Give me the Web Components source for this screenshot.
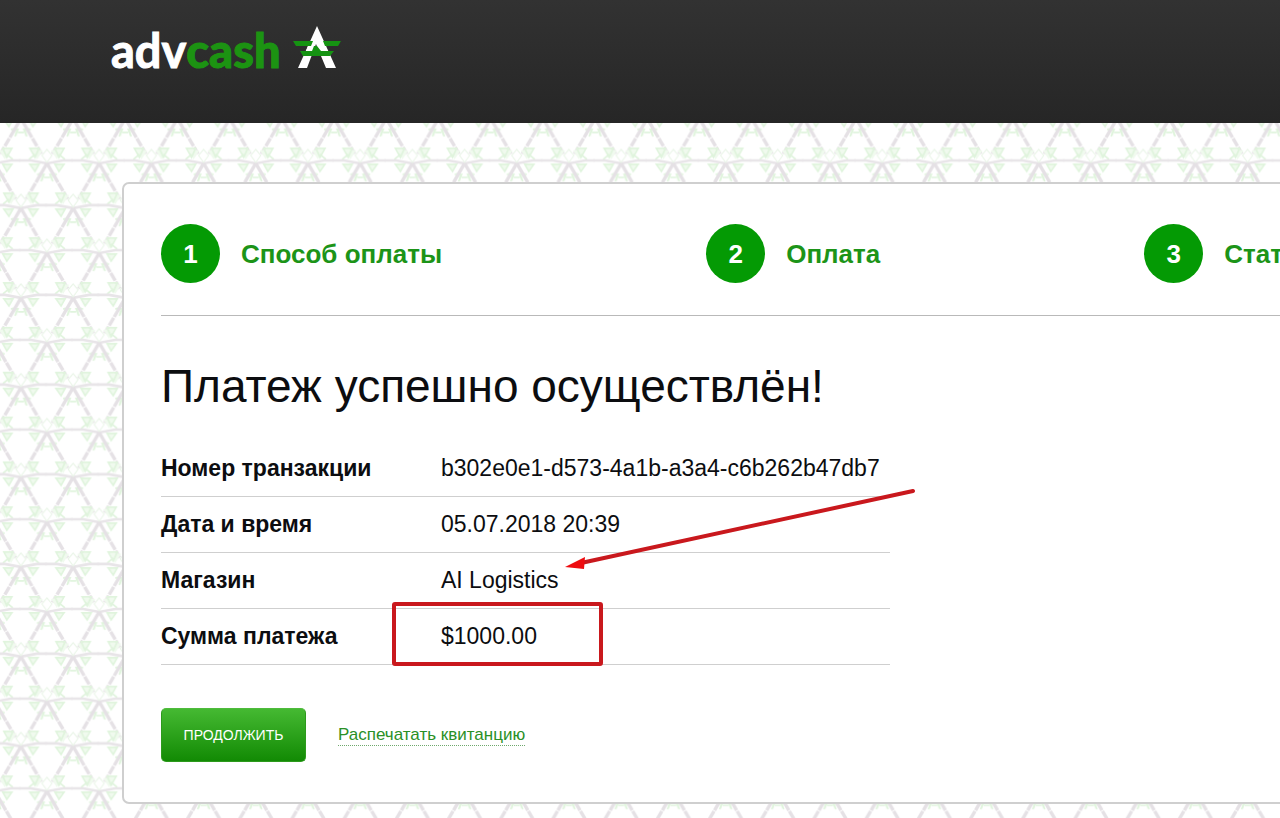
<!DOCTYPE html>
<html lang="ru">
<head>
<meta charset="utf-8">
<title>advcash</title>
<style>
html, body { margin: 0; height: 100%; }
body { font-family: "Liberation Sans", Arial, sans-serif; color: #0c0d10; }
</style>
</head>
<body>
<pay-page>
  <site-header slot="header"></site-header>
  <pay-card>
    <step-list slot="steps">
      <step-item number="1">Способ оплаты</step-item>
      <step-item number="2">Оплата</step-item>
      <step-item number="3">Стат</step-item>
    </step-list>
    <span slot="title">Платеж успешно осуществлён!</span>
    <payment-details></payment-details>
    <pay-actions slot="actions"></pay-actions>
  </pay-card>
</pay-page>
<script>
const define = (name, html, setup) => {
  const template = document.createElement('template');
  template.innerHTML = html;
  customElements.define(name, class extends HTMLElement {
    constructor() {
      super();
      this.attachShadow({ mode: 'open' }).append(template.content.cloneNode(true));
    }
    connectedCallback() { if (setup) setup(this); }
  });
};

// Lattice wallpaper: 5 x 10 repeats of the triangle cell in one tile.
const lattice = `<svg xmlns="http://www.w3.org/2000/svg" width="261" height="897">
<defs>
<g id="k">
<path d="M-16 -14l6 11l6 -9zM16 -14l-6 11l-6 -9zM-17 1h9l-4 7zM17 1h-9l4 7zM-9 10l6 1l-1 8zM9 10l-6 1l1 8z" fill="#f0faee"/>
<path d="M-17 -14h9l-4 9zM17 -14h-9l4 9zM-18 -3l6 -5M18 -3l-6 -5M-17 2h9l-4 7zM17 2h-9l4 7zM-10 12h7l-3 7M10 12h-7l3 7M-3 15h6" stroke="#e0f4dd" stroke-width="1.7"/>
<path d="M0 1L-16 -2H-28M0 1L16 -2H26" stroke="#e8e5e8" stroke-width="2.6"/>
<path d="M0 1L26 45.8M0 1L-26 45.8" stroke="#e5e1e5" stroke-width="3.4" stroke-dasharray="22 1 9 1 8 11"/>
<path d="M0 -13l5 6l-5 7l-5 -7z" fill="#fff" stroke="#e8f4e6" stroke-width="1"/>
</g>
<pattern id="p" width="52.2" height="89.7" patternUnits="userSpaceOnUse">
<g fill="none">
<use href="#k" x="-5.2" y="-17"/><use href="#k" x="47" y="-17"/><use href="#k" x="99.2" y="-17"/>
<use href="#k" x="-31.3" y="27.8"/><use href="#k" x="20.9" y="27.8"/><use href="#k" x="73.1" y="27.8"/>
<use href="#k" x="-5.2" y="72.7"/><use href="#k" x="47" y="72.7"/><use href="#k" x="99.2" y="72.7"/>
<use href="#k" x="20.9" y="117.5"/>
</g>
</pattern>
</defs>
<rect width="261" height="897" fill="#fff"/><rect width="261" height="897" fill="url(#p)"/></svg>`;

define('pay-page', `
<style>
:host { display: flex; flex-direction: column; min-height: 100%; overflow: hidden;
  background: #fff url("data:image/svg+xml,${encodeURIComponent(lattice)}"); }
main { padding: 59px 0 16px 122px; }
</style>
<slot name="header"></slot>
<main><slot></slot></main>`);

define('site-header', `
<style>
:host { display: block; background: linear-gradient(#323232, #262626); }
header { height: 123px; box-sizing: border-box; padding: 20px 0 0 111px; }
a { display: inline-flex; align-items: flex-start; gap: 12px; color: #fff; text-decoration: none;
  font: bold 47px/60px Lato, "Open Sans", sans-serif; -webkit-text-stroke: 1px currentColor; }
b { color: #1c9312; }
svg { margin-top: 6px; -webkit-text-stroke: 0; }
</style>
<header>
  <a href="#"><span>adv<b>cash</b></span>
  <svg width="50" height="42" viewBox="0 0 50 42" aria-hidden="true">
    <path d="M24 0L43 42H33L23 18L14 42H5Z" fill="#fff"/>
    <path d="M0 15H20L18 20H3ZM30 15H48L45 20H32Z" fill="#159312"/>
    <path d="M7 25H19L21 20H24L28 25H41L37 30H10Z" fill="#159312"/>
    <path d="M15 20H20L18 25H13Z" fill="#fff"/>
  </svg></a>
</header>`);

define('pay-card', `
<style>
:host { display: block; box-sizing: border-box; margin-right: -40px; padding: 40px 37px; background: #fff;
  border: 2px solid #cfcfcf; border-radius: 7px; }
h1 { margin: 40px 0 25px; font-size: 46px; line-height: 60px; font-weight: normal; white-space: nowrap; }
</style>
<slot name="steps"></slot>
<h1><slot name="title"></slot></h1>
<slot></slot>
<slot name="actions"></slot>`);

define('step-list', `
<style>
:host { display: flex; gap: 264px; margin-right: -37px; padding-bottom: 32px; border-bottom: 1px solid #b9b9b9; }
</style>
<slot></slot>`);

define('step-item', `
<style>
:host { display: flex; flex: none; align-items: center; gap: 21px; color: #1c9418;
  font-size: 26px; line-height: 30px; font-weight: bold; white-space: nowrap; }
i { display: flex; align-items: center; justify-content: center; width: 59px; height: 59px;
  border-radius: 50%; background: #049a04; color: #fff; font-style: normal; }
</style>
<i></i><span><slot></slot></span>`, el => {
  el.shadowRoot.querySelector('i').textContent = el.getAttribute('number');
});

define('payment-details', `
<style>
:host { display: block; position: relative; width: 729px; }
table { width: 100%; border-collapse: collapse; font-size: 23px; line-height: 27px; }
th, td { height: 55px; padding: 0; border-bottom: 1px solid #cfcfcf; text-align: left; white-space: nowrap; }
th { width: 280px; }
svg { position: absolute; left: 0; top: 0; overflow: visible; pointer-events: none; }
</style>
<table>
  <tr><th scope="row">Номер транзакции</th><td>b302e0e1-d573-4a1b-a3a4-c6b262b47db7</td></tr>
  <tr><th scope="row">Дата и время</th><td>05.07.2018 20:39</td></tr>
  <tr><th scope="row">Магазин</th><td>AI Logistics</td></tr>
  <tr><th scope="row">Сумма платежа</th><td>$1000.00</td></tr>
</table>
<svg width="729" height="224" aria-hidden="true">
  <rect x="233" y="163" width="207" height="60" rx="1" fill="none" stroke="#c9181d" stroke-width="4"/>
  <path d="M420 122L752 50" stroke="#c9181d" stroke-width="4" stroke-linecap="round"/>
  <path d="M404 126L424 116L423 128Z" fill="#ee0c10"/>
</svg>`);

define('pay-actions', `
<style>
:host { display: flex; align-items: center; gap: 32px; padding-top: 43px; }
button { width: 145px; height: 54px; padding: 0; border: 1px solid #2c9a1c; border-top-color: #4fbb3c; border-radius: 5px;
  background: linear-gradient(#45b932, #128a04); color: #fff; font: 14px/20px "Liberation Sans", Arial, sans-serif; }
a { color: #2a9026; font-size: 17px; line-height: 21px; text-decoration: none; border-bottom: 1px dotted #6fa86c; }
</style>
<button type="button">ПРОДОЛЖИТЬ</button>
<a href="#">Распечатать квитанцию</a>`);
</script>
</body>
</html>
